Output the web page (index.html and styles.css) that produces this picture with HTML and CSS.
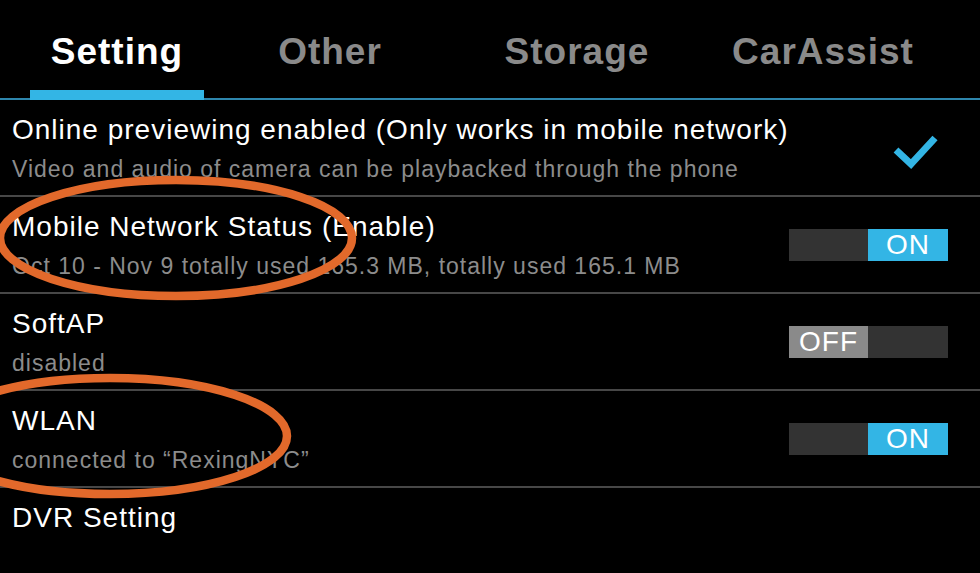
FILE: index.html
```html
<!DOCTYPE html>
<html lang="en">

<head>
    <meta charset="UTF-8">
    <meta name="viewport" content="width=device-width, initial-scale=1.0">
    <title>Setting</title>

    <link rel="stylesheet" href="styles.css">
</head>

<body>
    <div class="page">
        <div class="tabs">
            <div class="tab tab-setting active">Setting</div>
            <div class="tab tab-other">Other</div>
            <div class="tab tab-storage">Storage</div>
            <div class="tab tab-car">CarAssist</div>
        </div>

        <div class="row">
            <div class="text">
                <div class="title">Online previewing enabled (Only works in mobile network)</div>
                <div class="sub">Video and audio of camera can be playbacked through the phone</div>
            </div>
            <div class="control">
                <svg class="check" width="52" height="40" viewBox="0 0 52 40">
                    <polyline points="6,19 21,33 45,7" fill="none" stroke="#33b5e5" stroke-width="7" />
                </svg>
            </div>
        </div>

        <div class="row">
            <div class="text">
                <div class="title">Mobile Network Status (Enable)</div>
                <div class="sub">Oct 10 - Nov 9 totally used 165.3 MB, totally used 165.1 MB</div>
            </div>
            <div class="control">
                <div class="switch">
                    <span class="half"></span>
                    <span class="half on">ON</span>
                </div>
            </div>
        </div>

        <div class="row">
            <div class="text">
                <div class="title">SoftAP</div>
                <div class="sub">disabled</div>
            </div>
            <div class="control">
                <div class="switch">
                    <span class="half off">OFF</span>
                    <span class="half"></span>
                </div>
            </div>
        </div>

        <div class="row">
            <div class="text">
                <div class="title">WLAN</div>
                <div class="sub">connected to “RexingNYC”</div>
            </div>
            <div class="control">
                <div class="switch">
                    <span class="half"></span>
                    <span class="half on">ON</span>
                </div>
            </div>
        </div>

        <div class="row last">
            <div class="text">
                <div class="title">DVR Setting</div>
            </div>
        </div>

        <!-- marks drawn over the screenshot -->
        <svg class="marks" width="980" height="573" viewBox="0 0 980 573">
            <ellipse cx="176" cy="238" rx="176" ry="58" fill="none" stroke="#e2692b" stroke-width="8.5" />
            <ellipse cx="110" cy="436" rx="177" ry="58" fill="none" stroke="#e2692b" stroke-width="8.5" />
        </svg>
    </div>
</body>

</html>
```

FILE: styles.css
```css
html,
body {
    margin: 0;
    background: #000;
    overflow: hidden;
}

.page {
    position: relative;
    width: 980px;
    height: 573px;
    font-family: "Liberation Sans", Arial, sans-serif;
    color: #fff;
}

.tabs {
    display: flex;
    height: 98px;
    padding-left: 30px;
    border-bottom: 2px solid #2e86ad;
}

.tab {
    box-sizing: border-box;
    padding-top: 30px;
    text-align: center;
    font-size: 37px;
    line-height: 44px;
    font-weight: bold;
    letter-spacing: 1px;
    color: #8a8a8a;
}

.tab.active {
    color: #fff;
    margin-bottom: -2px;
    border-bottom: 10px solid #33b5e5;
}

.tab-setting {
    width: 174px;
}

.tab-other {
    width: 252px;
}

.tab-storage {
    width: 242px;
}

.tab-car {
    width: 250px;
}

.row {
    box-sizing: border-box;
    display: flex;
    justify-content: space-between;
    height: 97px;
    padding: 0 32px 0 12px;
    border-bottom: 2px solid #474747;
}

.row.last {
    height: auto;
    border-bottom: none;
}

.text {
    padding-top: 13px;
}

.title {
    font-size: 28px;
    line-height: 34px;
    letter-spacing: 1px;
}

.sub {
    margin-top: 8px;
    font-size: 23px;
    line-height: 28px;
    letter-spacing: 1px;
    color: #8c8c8c;
}

.control {
    display: flex;
    align-items: center;
    justify-content: flex-end;
    width: 159px;
}

.check {
    margin-top: 6px;
    margin-right: 6px;
}

.switch {
    display: flex;
    width: 159px;
    height: 32px;
    background: #333;
}

.half {
    width: 80px;
    text-align: center;
    font-size: 28px;
    line-height: 32px;
    letter-spacing: 1px;
    color: #fff;
}

.half:first-child {
    width: 79px;
}

.half.on {
    background: #33b5e5;
}

.half.off {
    background: #8a8a8a;
}

.marks {
    position: absolute;
    top: 0;
    left: 0;
    pointer-events: none;
}
```
